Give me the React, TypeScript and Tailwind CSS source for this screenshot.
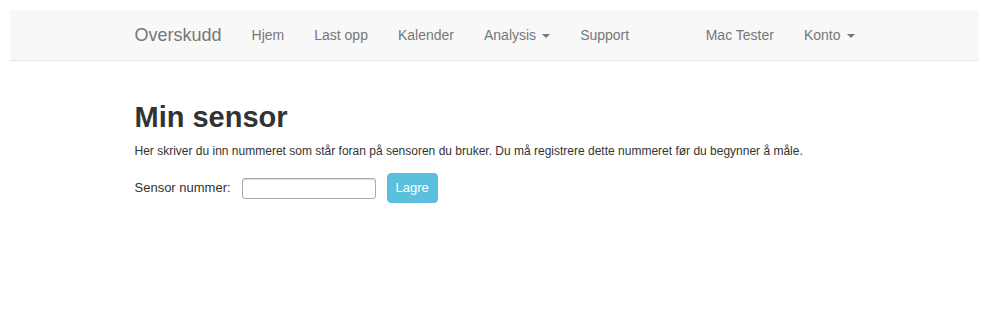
import React from "react";

const Caret = () => (
  <span className="inline-block ml-[6px] align-middle w-0 h-0 border-t-[4px] border-t-[#777] border-x-[4px] border-x-transparent" />
);

export default function App() {
  const font = { fontFamily: '"Liberation Sans", Arial, sans-serif' };
  return (
    <div className="min-h-[328px] bg-white pt-[10px] px-[10px] text-[14px] text-[#333]" style={font}>
      <nav className="bg-[#f8f8f8] border-b border-[#e7e7e7] h-[51px]">
        <div className="w-[750px] mx-auto px-[15px] flex h-[50px]">
          <a className="-ml-[15px] px-[15px] h-[50px] leading-[20px] py-[15px] text-[18px] text-[#777]">Overskudd</a>
          <ul className="flex">
            {["Hjem", "Last opp", "Kalender"].map((t) => (
              <li key={t} className="px-[15px] py-[15px] leading-[20px] text-[#777]">{t}</li>
            ))}
            <li className="px-[15px] py-[15px] leading-[20px] text-[#777]">Analysis<Caret /></li>
            <li className="px-[15px] py-[15px] leading-[20px] text-[#777]">Support</li>
          </ul>
          <ul className="flex ml-auto -mr-[15px]">
            <li className="px-[15px] py-[15px] leading-[20px] text-[#777]">Mac Tester</li>
            <li className="px-[15px] py-[15px] leading-[20px] text-[#777]">Konto<Caret /></li>
          </ul>
        </div>
      </nav>
      <main className="w-[750px] mx-auto px-[15px] pt-[40px]">
        <h1 className="mb-[10px] text-[29px] leading-[32px] font-bold text-[#333]">Min sensor</h1>
        <p className="leading-[17px] text-[12px]">
          Her skriver du inn nummeret som står foran på sensoren du bruker. Du må registrere dette nummeret før du begynner å måle.
        </p>
        <div className="flex items-center mt-[13px] h-[30px]">
          <label className="text-[13px] leading-[20px]">Sensor nummer:</label>
          <input
            type="text"
            className="ml-[11px] w-[134px] h-[21px] border border-[#a9a9a9] rounded-[3px] bg-white shadow-[inset_0_1px_1px_rgba(0,0,0,0.15)] outline-none"
          />
          <button className="ml-[11px] w-[51px] h-[30px] rounded-[4px] bg-[#5bc0de] border border-[#5bc0de] text-white text-[13px] leading-[20px]">
            Lagre
          </button>
        </div>
      </main>
    </div>
  );
}
